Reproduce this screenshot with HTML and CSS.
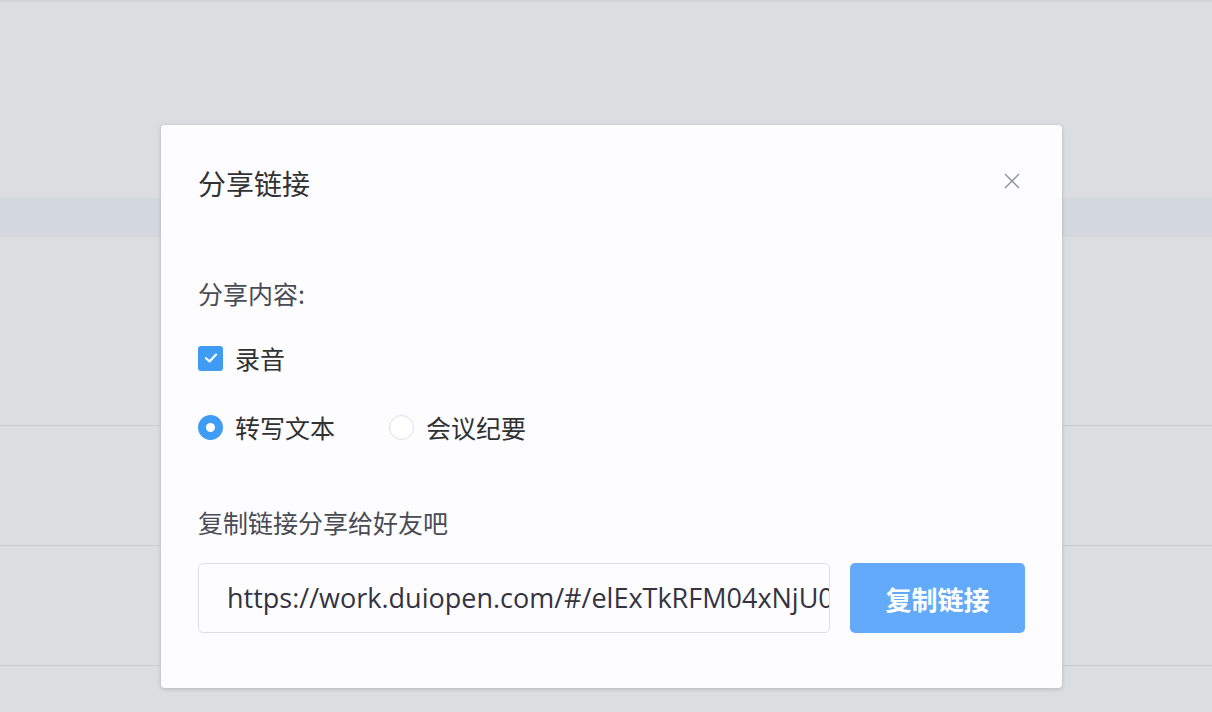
FILE: index.html
```html
<!DOCTYPE html>
<html>
<head>
    <title>分享链接</title>
    <link rel="stylesheet" href="styles.css">
</head>
<body>
    <div class="page">
        <div class="page-top"></div>
        <div class="page-band"></div>
        <div class="page-gap"></div>
        <div class="page-row"></div>
        <div class="page-row"></div>
        <div class="page-rest"></div>
    </div>

    <div class="dialog">
        <div class="dialog-header">
            <span class="dialog-title">分享链接</span>
            <button class="close-btn" aria-label="关闭">
                <svg width="18" height="18" viewBox="0 0 18 18">
                    <path d="M2 2 L16 16 M16 2 L2 16" stroke="#8c8f96" stroke-width="1.4" fill="none"/>
                </svg>
            </button>
        </div>

        <div class="section-label">分享内容:</div>

        <label class="check-row">
            <span class="checkbox">
                <svg width="16" height="16" viewBox="0 0 16 16">
                    <path d="M3 8.2 L6.6 11.4 L13 4.6" stroke="#fff" stroke-width="2.2" fill="none" stroke-linecap="round" stroke-linejoin="round"/>
                </svg>
            </span>
            <span>录音</span>
        </label>

        <div class="radio-row">
            <label class="radio-item">
                <span class="radio checked"></span>
                <span>转写文本</span>
            </label>
            <label class="radio-item">
                <span class="radio"></span>
                <span>会议纪要</span>
            </label>
        </div>

        <div class="copy-label">复制链接分享给好友吧</div>

        <div class="copy-row">
            <div class="link-input">https://work.duiopen.com/#/elExTkRFM04xNjU0</div>
            <button class="copy-btn">复制链接</button>
        </div>
    </div>
</body>
</html>
```

FILE: styles.css
```css
* {
    box-sizing: border-box;
}
body {
    margin: 0;
    width: 1212px;
    height: 712px;
    overflow: hidden;
    background: #dbdde1;
    font-family: "Noto Sans CJK SC", "Open Sans", sans-serif;
    color: #303133;
}
.page {
    display: flex;
    flex-direction: column;
    height: 712px;
    border-top: 2px solid #d0d3d8;
}
.page-top {
    height: 196px;
}
.page-band {
    height: 39px;
    background: #d3d7de;
}
.page-gap {
    height: 189px;
    border-bottom: 1px solid #c9cdd3;
}
.page-row {
    height: 120px;
    border-bottom: 1px solid #c9cdd3;
}
.page-rest {
    flex: 1;
}

.dialog {
    position: absolute;
    left: 161px;
    top: 125px;
    width: 901px;
    height: 563px;
    background: #fdfdff;
    border-radius: 4px;
    box-shadow: 0 1px 4px rgba(0, 0, 0, 0.18);
    padding: 38px 37px 0 37px;
    display: flex;
    flex-direction: column;
}
.dialog-header {
    display: flex;
    justify-content: space-between;
    align-items: center;
    height: 40px;
}
.dialog-title {
    font-size: 28px;
    line-height: 40px;
    color: #303133;
}
.close-btn {
    border: none;
    background: none;
    padding: 0;
    margin-right: 4px;
    display: flex;
    margin-top: -4px;
}

.section-label {
    margin-top: 72px;
    font-size: 25px;
    line-height: 36px;
    color: #494b55;
}

.check-row {
    margin-top: 29px;
    display: flex;
    align-items: center;
    gap: 12px;
    font-size: 25px;
    line-height: 36px;
}
.checkbox {
    width: 25px;
    height: 25px;
    border-radius: 3px;
    background: #3f9cf5;
    display: flex;
    align-items: center;
    justify-content: center;
}

.radio-row {
    margin-top: 33px;
    display: flex;
    align-items: center;
    gap: 54px;
    font-size: 25px;
    line-height: 36px;
}
.radio-item {
    display: flex;
    align-items: center;
    gap: 12px;
}
.radio {
    width: 25px;
    height: 25px;
    border-radius: 50%;
    border: 1px solid #dcdfe6;
    background: #fff;
    display: flex;
    align-items: center;
    justify-content: center;
}
.radio.checked {
    border: none;
    background: #3f9cf5;
}
.radio.checked::after {
    content: "";
    width: 9px;
    height: 9px;
    border-radius: 50%;
    background: #fff;
}

.copy-label {
    margin-top: 59px;
    font-size: 25px;
    line-height: 36px;
    color: #494b55;
}

.copy-row {
    margin-top: 23px;
    display: flex;
    gap: 20px;
}
.link-input {
    width: 632px;
    height: 70px;
    border: 1px solid #dcdfe6;
    border-radius: 5px;
    padding: 0 0 0 28px;
    font-family: "Open Sans", "Noto Sans CJK SC", sans-serif;
    font-size: 27px;
    line-height: 68px;
    white-space: nowrap;
    overflow: hidden;
    color: #34333f;
}
.copy-btn {
    width: 175px;
    height: 70px;
    border: none;
    border-radius: 5px;
    background: #63abfa;
    color: #fff;
    font-family: "Noto Sans CJK SC", sans-serif;
    font-size: 26px;
    font-weight: bold;
}
```
